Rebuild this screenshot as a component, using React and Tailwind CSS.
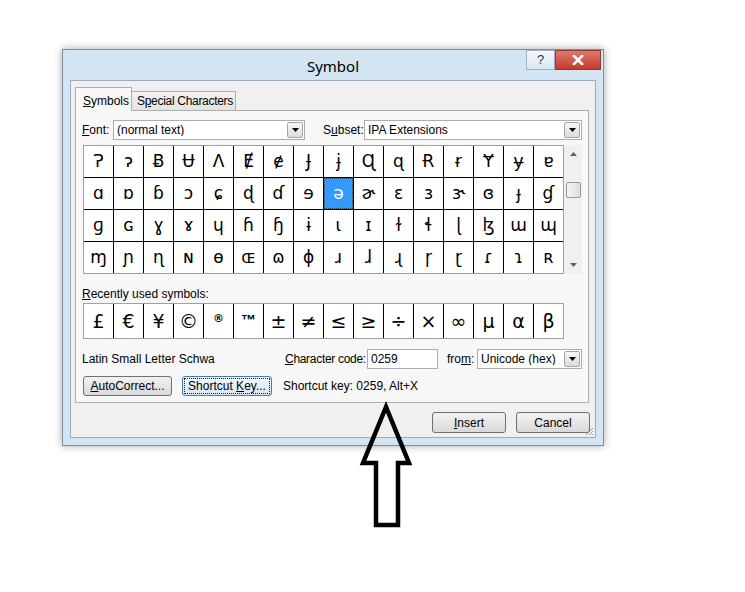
import React from "react";

// IPA Extensions view, starting at U+0241 (four rows of sixteen)
const symbols = Array.from({ length: 64 }, (_, i) => String.fromCodePoint(0x241 + i));
const selectedIndex = 0x259 - 0x241; // ə

const recent = ["£", "€", "¥", "©", "®", "™", "±", "≠", "≤", "≥", "÷", "×", "∞", "µ", "α", "β"];

const Caret = () => (
  <svg width="7" height="4" viewBox="0 0 7 4">
    <path d="M0 0 H7 L3.5 4 Z" fill="#000" />
  </svg>
);

const Dropdown = ({ width, text }) => (
  <div className={`flex h-[20px] items-center border border-[#abadb3] bg-white ${width}`}>
    <span className="flex-1 truncate whitespace-nowrap pl-[3px] text-[12px] leading-none">{text}</span>
    <div className="mr-px flex h-[16px] w-[16px] items-center justify-center rounded-[2px] border border-[#a6a6a6] bg-gradient-to-b from-[#f6f6f6] to-[#dcdcdc]">
      <Caret />
    </div>
  </div>
);

const Button = ({ width, children, focused }) => (
  <div
    className={`flex items-center justify-center whitespace-nowrap rounded-[3px] border text-[12px] ${width} ${
      focused
        ? "border-[#3c7fb1] bg-gradient-to-b from-[#f2f8fc] to-[#d6e6f2]"
        : "border-[#707070] bg-gradient-to-b from-[#f2f2f2] to-[#d9d9d9]"
    }`}
  >
    <span className={focused ? "border border-dotted border-[#222] px-[3px] leading-[14px]" : "leading-[14px]"}>
      {children}
    </span>
  </div>
);

const RecentCell = ({ s }) => {
  if (s === "®") {
    return (
      <div className="flex h-[34px] items-start justify-center bg-white pt-[7px] font-['DejaVu_Sans',sans-serif] text-[11px] font-bold">
        {s}
      </div>
    );
  }
  if (s === "™") {
    return (
      <div className="flex h-[34px] items-start justify-center bg-white pt-[8px] font-['Liberation_Sans',sans-serif] text-[15px] font-bold leading-none">
        {s}
      </div>
    );
  }
  return (
    <div className="flex h-[34px] items-center justify-center bg-white font-['DejaVu_Sans',sans-serif] text-[19px]">
      {s}
    </div>
  );
};

const Symbol = () => {
  return (
    <div className="relative h-[592px] w-[745px] overflow-hidden bg-white font-['Liberation_Sans',sans-serif] text-black">
      <div className="pl-[62px] pt-[49px]">
        {/* Dialog window */}
        <div className="flex h-[397px] w-[542px] flex-col border border-[#7b8ea0] bg-[#d3e4f2] shadow-[0_0_8px_rgba(0,0,0,0.35)]">
          {/* Title bar */}
          <div className="flex h-[30px]">
            <div className="w-[77px]" />
            <div className="flex flex-1 items-center justify-center pt-[2px] font-['Noto_Sans',sans-serif] text-[15px]">
              Symbol
            </div>
            <div className="flex w-[77px] items-start pr-[2px]">
              <div className="flex h-[20px] w-[29px] items-center justify-center border border-[#9fb3c6] bg-gradient-to-b from-[#f4f8fb] to-[#dae6f0] text-[13px] text-[#333]">
                ?
              </div>
              <div className="flex h-[20px] w-[46px] items-center justify-center border border-[#8d3a34] bg-gradient-to-b from-[#e0786c] to-[#c2392c]">
                <svg width="12" height="10" viewBox="0 0 12 10">
                  <path d="M2 1 L10 9 M10 1 L2 9" stroke="#fff" strokeWidth="2.6" strokeLinecap="square" />
                </svg>
              </div>
            </div>
          </div>

          {/* Client area */}
          <div className="relative mx-[7px] flex h-[358px] flex-col border border-[#9aadbf] bg-[#f0f0f0] text-[12px]">
            {/* Tabs */}
            <div className="pl-[4px] pt-[6px]">
              <div className="flex h-[23px] items-end whitespace-nowrap">
                <div className="relative z-10 -mb-px flex h-[24px] w-[57px] items-start border border-b-0 border-[#adadad] bg-[#f7f7f7] pl-[7px] pt-[4px]">
                  <span>
                    <span className="underline">S</span>ymbols
                  </span>
                </div>
                <div className="flex h-[19px] w-[104px] items-center border border-b-0 border-l-0 border-[#adadad] bg-gradient-to-b from-[#f3f3f3] to-[#e3e3e3] pl-[5px] tracking-[-0.3px]">
                  <span>
                    S<span className="underline">p</span>ecial Characters
                  </span>
                </div>
              </div>
            </div>

            {/* Tab panel */}
            <div className="ml-[4px] h-[293px] w-[514px] whitespace-nowrap border border-[#adadad] bg-[#f7f7f7] pl-[6px] pt-[9px]">
              {/* Font / subset */}
              <div className="flex h-[20px] items-center">
                <span className="w-[31px]">
                  <span className="underline">F</span>ont:
                </span>
                <Dropdown width="w-[192px]" text="(normal text)" />
                <span className="ml-[18px] w-[41px]">
                  S<span className="underline">u</span>bset:
                </span>
                <Dropdown width="w-[218px]" text="IPA Extensions" />
              </div>

              {/* Symbol grid */}
              <div className="ml-px mt-[5px] flex">
                <div className="grid grid-cols-[repeat(16,29px)] grid-rows-[repeat(4,31px)] gap-px border border-[#a0a0a0] bg-black">
                  {symbols.map((s, i) => (
                    <div
                      key={i}
                      className={`flex items-center justify-center font-['DejaVu_Sans',sans-serif] text-[17px] ${
                        i === selectedIndex
                          ? "bg-[#3399ff] text-white outline-1 outline-dotted -outline-offset-1 outline-[#1b3b5c]"
                          : "bg-white"
                      }`}
                    >
                      {s}
                    </div>
                  ))}
                </div>
                {/* Scrollbar */}
                <div className="flex h-[129px] w-[18px] flex-col items-center bg-[#f0f0f0] pl-[1px]">
                  <svg className="mt-[7px]" width="7" height="4" viewBox="0 0 7 4">
                    <path d="M0 4 H7 L3.5 0 Z" fill="#606060" />
                  </svg>
                  <div className="mt-[26px] h-[16px] w-[15px] rounded-[2px] border border-[#979797] bg-gradient-to-r from-[#f3f3f3] to-[#dedede]" />
                  <div className="flex-1" />
                  <svg className="mb-[7px]" width="7" height="4" viewBox="0 0 7 4">
                    <path d="M0 0 H7 L3.5 4 Z" fill="#606060" />
                  </svg>
                </div>
              </div>

              {/* Recently used */}
              <div className="mt-[12px] leading-[16px]">
                <span className="underline">R</span>ecently used symbols:
              </div>
              <div className="ml-px mt-px grid w-[481px] grid-cols-[repeat(16,29px)] gap-px border border-[#a0a0a0] bg-black">
                {recent.map((s, i) => (
                  <RecentCell key={i} s={s} />
                ))}
              </div>

              {/* Character info */}
              <div className="mt-[10px] flex h-[20px] items-center">
                <span className="w-[203px]">Latin Small Letter Schwa</span>
                <span className="w-[82px] tracking-[-0.3px]">
                  <span className="underline">C</span>haracter code:
                </span>
                <div className="flex h-[20px] w-[71px] items-center border border-[#abadb3] bg-white pl-[3px]">0259</div>
                <span className="ml-[9px] w-[30px]">
                  fro<span className="underline">m</span>:
                </span>
                <Dropdown width="w-[105px]" text="Unicode (hex)" />
              </div>

              {/* Buttons */}
              <div className="mt-[7px] flex h-[20px] items-stretch">
                <div className="ml-px flex">
                  <Button width="w-[89px]">
                    <span className="underline">A</span>utoCorrect...
                  </Button>
                </div>
                <div className="ml-[10px] flex">
                  <Button width="w-[90px]" focused>
                    Shortcut <span className="underline">K</span>ey...
                  </Button>
                </div>
                <span className="ml-[11px] flex items-center">Shortcut key: 0259, Alt+X</span>
              </div>
            </div>

            {/* Insert / Cancel */}
            <div className="mt-[9px] flex h-[21px] justify-end gap-[10px] pr-[5px]">
              <Button width="w-[74px]">
                <span className="underline">I</span>nsert
              </Button>
              <Button width="w-[74px]">Cancel</Button>
            </div>

            {/* Resize grip */}
            <svg className="absolute bottom-[1px] right-[1px]" width="10" height="10" viewBox="0 0 10 10">
              <path d="M9 2 L2 9 M9 5 L5 9 M9 8 L8 9" stroke="#9a9a9a" strokeWidth="1" />
            </svg>
          </div>
        </div>
      </div>

      {/* Annotation arrow pointing at the shortcut key text */}
      <svg className="absolute left-[350px] top-[395px]" width="70" height="140" viewBox="0 0 70 140">
        <path
          d="M36 12 L13 68 L26 68 L26 130 L48 130 L48 68 L59 68 Z"
          fill="none"
          stroke="#000"
          strokeWidth="4.5"
          strokeLinejoin="miter"
        />
      </svg>
    </div>
  );
};

export default function App() {
  return <Symbol />;
}
